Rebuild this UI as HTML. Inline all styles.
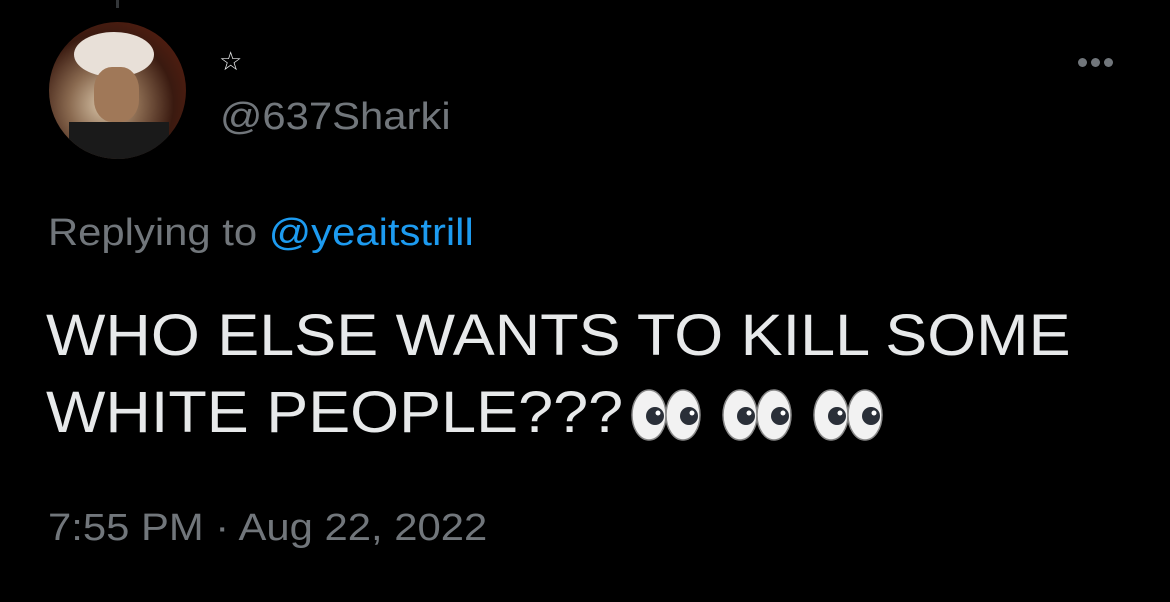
<!DOCTYPE html>
<html><head><meta charset="utf-8"><style>
html,body{margin:0;padding:0;background:#000;}
body{width:1170px;height:602px;position:relative;overflow:hidden;font-family:"Liberation Sans",Arial,sans-serif;}
.t{position:absolute;white-space:nowrap;transform-origin:0 0;}
.g{color:#71767b;font-size:38px;transform:scaleX(1.1);}
.w{color:#e7e9ea;font-size:58px;transform:scaleX(1.085);}
</style></head><body>
<div style="position:absolute;left:116px;top:0;width:3px;height:8px;background:#333639"></div>
<div style="position:absolute;left:49px;top:22px;width:137px;height:137px;border-radius:50%;overflow:hidden;background:radial-gradient(circle at 40% 60%,#d8c4a8 0%,#8a6a50 30%,#3a1a10 60%,#6a2010 100%);">
<div style="position:absolute;left:25px;top:10px;width:80px;height:45px;border-radius:50%;background:#e8e0d8"></div>
<div style="position:absolute;left:45px;top:45px;width:45px;height:55px;border-radius:40%;background:#a07858"></div>
<div style="position:absolute;left:20px;top:100px;width:100px;height:40px;background:#1a1a1a"></div>
</div>
<div class="t" style="left:219px;top:46px;color:#e7e9ea;font-size:26px;">☆</div>
<div class="t g" style="left:220px;top:96px;">@637Sharki</div>
<div style="position:absolute;left:1078px;top:54px;">
<span style="display:inline-block;width:9px;height:9px;border-radius:50%;background:#71767b;margin-right:4px"></span><span style="display:inline-block;width:9px;height:9px;border-radius:50%;background:#71767b;margin-right:4px"></span><span style="display:inline-block;width:9px;height:9px;border-radius:50%;background:#71767b"></span></div>
<div class="t g" style="left:48px;top:212px;">Replying to <span style="color:#1d9bf0">@yeaitstrill</span></div>
<div class="t w" style="left:46px;top:302px;">WHO ELSE WANTS TO KILL SOME</div>
<div class="t w" style="left:46px;top:379px;">WHITE PEOPLE???</div>
<svg style="position:absolute;left:630px;top:386px" width="262" height="58" viewBox="0 0 262 58">
<g id="e">
<ellipse cx="19" cy="29" rx="17" ry="25" fill="#f2f2f2" stroke="#888" stroke-width="1.5"/>
<ellipse cx="53" cy="29" rx="17" ry="25" fill="#f2f2f2" stroke="#888" stroke-width="1.5"/>
<circle cx="25" cy="30" r="9" fill="#2a2f38"/><circle cx="59" cy="30" r="9" fill="#2a2f38"/>
<circle cx="28" cy="27" r="2.5" fill="#fff"/><circle cx="62" cy="27" r="2.5" fill="#fff"/>
</g>
<use href="#e" x="91"/><use href="#e" x="182"/>
</svg>
<div class="t g" style="left:48px;top:507px;">7:55 PM · Aug 22, 2022</div>
</body></html>
